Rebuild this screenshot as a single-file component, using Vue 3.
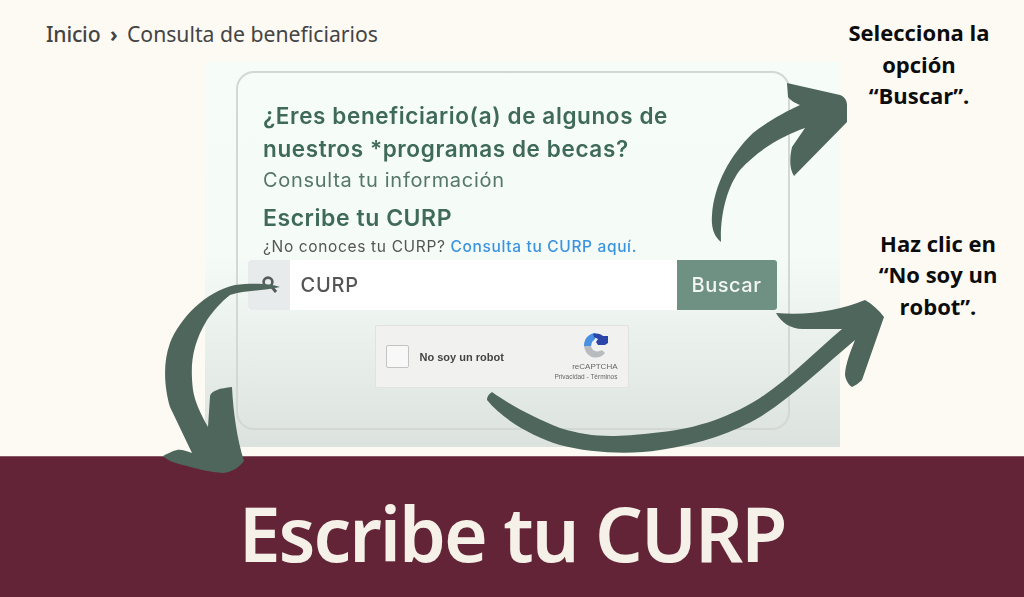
<script setup>
const lines = ['¿Eres beneficiario(a) de algunos de', 'nuestros *programas de becas?']
</script>

<template>
  <div class="page">
    <div class="top">
      <nav class="crumbs"><b>Inicio</b><b class="sep">›</b><span>Consulta de beneficiarios</span></nav>
      <section class="shot">
        <div class="card">
          <div class="intro">
            <h2 v-for="l in lines" :key="l">{{ l }}</h2>
            <p class="sub">Consulta tu información</p>
            <h3>Escribe tu CURP</h3>
            <p class="hint">¿No conoces tu CURP? <a>Consulta tu CURP aquí.</a></p>
          </div>
          <div class="search">
            <span class="ico">
              <svg width="18" height="18" viewBox="0 0 18 18"><circle cx="8" cy="6" r="4.4" fill="none" stroke="#555b5b" stroke-width="2.6"/><path d="M11 10l5 6" stroke="#555b5b" stroke-width="3" fill="none"/></svg>
            </span>
            <span class="field">CURP</span>
            <span class="btn">Buscar</span>
          </div>
          <div class="captcha">
            <span class="box"></span>
            <span class="robot">No soy un robot</span>
            <span class="rc">
              <svg class="rclogo" width="26" height="26" viewBox="0 0 26 26"><path d="M1 13C1 6 5 1 12 0l2 2-2 4-3 3-1 4z" fill="#4a90e2"/><path d="M10 1c4-1 8 0 10 2h5v7l-3 2h-7l-2-3 2-3-4-2z" fill="#2b46a8"/><path d="M1 13h7c1 5 6 7 11 4l3 3c-5 7-19 7-21-7z" fill="#b9bcbf"/></svg>
              <span class="rc1">reCAPTCHA</span>
              <span class="rc2">Privacidad - Términos</span>
            </span>
          </div>
        </div>
      </section>
      <aside class="notes">
        <p class="n1">Selecciona la<br>opción<br>“Buscar”.</p>
        <p class="n2">Haz clic en<br>“No soy un<br>robot”.</p>
      </aside>
    </div>
    <footer class="banner">Escribe tu CURP</footer>
    <svg class="arrows" width="1024" height="597" viewBox="0 0 1024 597">
      <path fill="#4f665c" d="M280 287 C270 283 250 283 235 285 C205 292 180 318 170 343 C162 365 165 390 170 407 L192 453 C186 451 181 449 177 450 C172 451 167 454 163 456 C168 461 175 463 183 465 C197 469 210 472 223 473 C233 472 239 467 244 461 C237 440 233 410 232 387 C226 388 221 388 217 390 C212 392 210 394 210 397 L208 427 C200 413 195 402 193 390 C190 365 192 345 207 320 C214 310 222 301 230 295 C245 290 265 291 280 287 Z"/>
      <path fill="#4f665c" d="M721 242 C714 236 711 228 712 215 C714 185 730 155 753 133 C770 120 785 112 800 105 C795 103 790 100 788 97 L787 83 L840 95 C845 97 847 101 847 105 L847 122 L794 176 C790 170 789 160 792 147 L805 128 C785 135 760 148 740 170 C727 187 720 215 721 242 Z"/>
      <path fill="#4f665c" d="M776 313 C781 322 790 329 803 329 L842 329 C815 352 790 378 760 398 C725 420 690 430 653 433 C610 438 590 437 560 428 C535 418 510 405 492 392 Q487 395 487 400 C505 422 535 437 560 445 C590 453 630 455 660 450 C700 444 735 432 760 417 C795 395 825 365 855 340 C851 350 845 365 845 375 C846 381 849 385 852 387 C856 385 859 383 862 380 L884 317 C879 310 872 304 865 300 C840 310 810 316 776 313 Z"/>
    </svg>
  </div>
</template>

<style>
body { margin: 0; }
</style>

<style scoped>
.page { position: relative; width: 1024px; height: 597px; overflow: hidden; background: #fdfaf4; display: flex; flex-direction: column; }
.top { flex: none; height: 456px; display: grid; grid-template-columns: 205px 635px 184px; grid-template-rows: 62px 385px; }
.crumbs { grid-column: 1 / 3; padding: 21px 0 0 46px; font: 400 21.2px/26px "Noto Sans", sans-serif; color: #444; display: flex; gap: 9.5px; white-space: nowrap; }
.crumbs b { font-weight: 500; letter-spacing: -0.2px; }
.crumbs .sep { font-weight: 700; }
.shot { grid-column: 2; grid-row: 2; background: linear-gradient(#f6fdf9 0%, #f5fbf7 50%, #dce2de 100%); padding: 9px 0 0 31px; color: #3f6a58; font-family: Inter, sans-serif; filter: blur(0.35px); }
.card { width: 554px; height: 359px; box-sizing: border-box; border: 2.5px solid #d3d8d5; border-radius: 18px; padding: 26px 0 0 9.5px; }
.intro { padding-left: 15.5px; }
.card h2 { margin: 0; font: 600 22.5px/33px Inter, sans-serif; letter-spacing: 0.62px; white-space: nowrap; }
.sub { margin: 1px 0 0; font: 400 20px/28px Inter, sans-serif; letter-spacing: 0.7px; color: #55766a; }
.card h3 { margin: 10px 0 0; font: 600 23px/28px Inter, sans-serif; letter-spacing: 0.55px; }
.hint { margin: 6px 0 0; font: 400 15.5px/18px Inter, sans-serif; letter-spacing: 0.65px; color: #555; white-space: nowrap; }
.hint a { color: #3b93e0; font-weight: 500; }
.search { margin-top: 4px; width: 529px; height: 50px; display: flex; background: #fff; }
.ico { width: 42px; background: #e8ebec; display: flex; align-items: center; justify-content: center; border-radius: 3px 0 0 3px; }
.field { flex: 1; padding-left: 11px; font: 500 20px/50px Inter, sans-serif; letter-spacing: 0.8px; color: #555; }
.btn { width: 100px; background: #6e9184; color: #f4f6f3; font: 500 20px/50px Inter, sans-serif; letter-spacing: 0.5px; text-align: center; border-radius: 0 3px 3px 0; }
.captcha { width: 254px; height: 63px; margin: 15px 0 0 127px; box-sizing: border-box; border: 1px solid #dfe2df; border-radius: 2px; background: #f1f2f0; display: flex; align-items: center; padding: 0 10px; }
.box { width: 23px; height: 23px; box-sizing: border-box; border: 1.5px solid #c2c4c2; border-radius: 2px; background: #f8f8f8; }
.robot { margin-left: 11px; font: 700 11px "Liberation Sans", sans-serif; color: #444; flex: 1; }
.rc { display: flex; flex-direction: column; align-items: flex-end; }
.rclogo { margin: 0 9px 3px 0; }
.rc1 { font: 400 8px/10px "Liberation Sans", sans-serif; color: #666; }
.rc2 { font: 400 6.5px/9px "Liberation Sans", sans-serif; color: #666; }
.notes { grid-column: 3; grid-row: 1 / 3; color: #0c0c0c; font: 700 22px/31.6px "Open Sans", sans-serif; }
.notes p { margin: 0; text-align: center; white-space: nowrap; }
.n1 { padding-top: 17px; margin-left: -8px !important; width: 174px; }
.n2 { padding: 116px 0 0 12px; width: 184px; box-sizing: border-box; }
.banner { flex: 1; background: #632437; border-top: 1px solid #8a5a66; color: #f5f0e8; font: 600 75px/153px "Noto Sans", sans-serif; letter-spacing: -2px; text-align: center; }
.arrows { position: absolute; left: 0; top: 0; pointer-events: none; }
</style>
